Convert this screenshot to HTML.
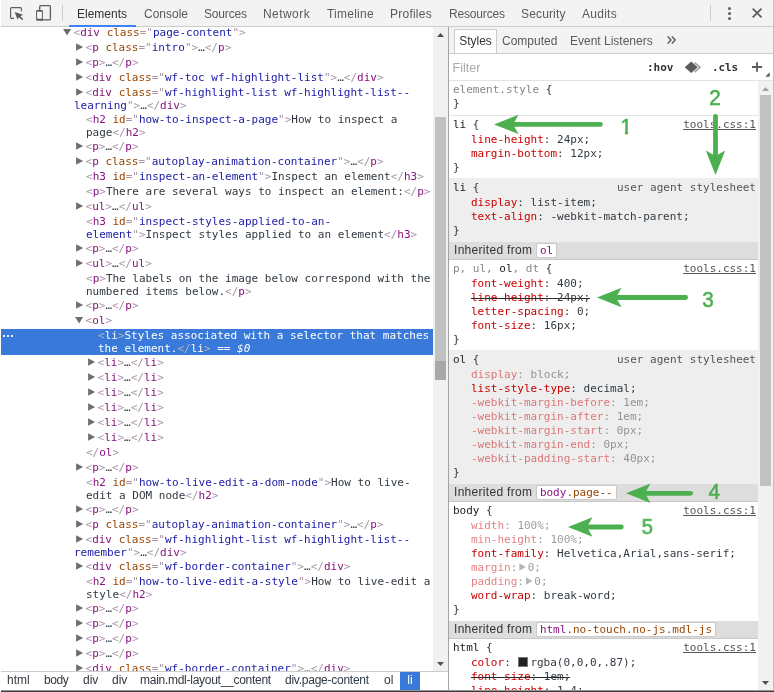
<!DOCTYPE html>
<html lang="en"><head><meta charset="utf-8"><title>DevTools</title>
<style>
*{box-sizing:border-box}
html,body{margin:0;padding:0}
body{width:774px;height:692px;position:relative;overflow:hidden;background:#fff;
  font-family:"Liberation Sans","DejaVu Sans",sans-serif;font-size:12px;color:#303942}
#app{position:absolute;left:0;top:0;width:774px;height:692px;overflow:hidden;will-change:transform}
.abs{position:absolute}
.mono,.tree,.sec,.node,.flt .m{font-family:"DejaVu Sans Mono","Liberation Mono",monospace;font-size:11px}
/* top toolbar */
#tb{left:1px;top:0;width:772px;height:27px;background:#f3f3f3;border-bottom:1px solid #cdcdcd}
#tb .tab{position:absolute;top:1px;height:26px;line-height:26px;color:#5a5a5a;white-space:nowrap}
#tb .tab.on{color:#333}
#tb .ul{position:absolute;left:68px;top:25px;width:67px;height:2px;background:#3e82f7}
.vsep{position:absolute;width:1px;background:#ccc}
/* tree */
#treewrap{left:1px;top:27px;width:432px;height:644px;overflow:hidden;background:#fff}
.tree{position:absolute;left:-1px;top:-2px;width:433px;color:#303942}
.r{line-height:13px;min-height:14px;margin-top:1px;white-space:nowrap;position:relative}
.b{color:#a894a6}.t{color:#881280}.an{color:#994500}.av{color:#1a1aa6}.el{color:#303942}
.tri{display:inline-block;width:11.5px;height:9px;position:relative;vertical-align:baseline}
.tri::before{content:"";position:absolute}
.tri.closed::before{left:2.1px;top:1.2px;width:7px;height:7.6px;background:#6e6e6e;clip-path:polygon(0 0,100% 50%,0 100%)}
.tri.open::before{left:1.1px;top:1.9px;width:8px;height:6.7px;background:#6e6e6e;clip-path:polygon(0 0,100% 0,50% 100%)}
.r.sel{background:#3879d9;color:#fff}
.r.sel .sb{color:#b9b3b0}
.dots{position:absolute;left:3px;top:6px;width:2px;height:2px;background:#e6eefb;box-shadow:4px 0 0 #e6eefb,8px 0 0 #e6eefb}
/* left scrollbar */
.sbar{background:#f1f1f1}
.thumb{background:#c1c1c1}
/* breadcrumbs */
#crumbs{left:1px;top:671px;width:447px;height:19px;border-top:1px solid #ccc;background:#fff}
#crumbs span{position:absolute;top:0;height:17px;line-height:17px;white-space:nowrap;color:#303942}
#crumbs .on{background:#3879d9;color:#fff;text-align:center;height:18px}
/* right panel */
#split{left:448px;top:27px;width:1px;height:663px;background:#a3a3a3}
#rp{left:449px;top:27px;width:325px;height:663px;background:#fff;overflow:hidden}
#rtabs{left:0;top:0;width:325px;height:27px;background:#f3f3f3;border-bottom:1px solid #ccc}
#rtabs .tab{position:absolute;top:3px;height:23px;line-height:23px;color:#5a5a5a;white-space:nowrap}
#rtabs .tab.on{top:2px;height:24px;line-height:23px;left:5px;width:43px;background:#fff;border:1px solid #ccc;border-bottom:none;color:#333;text-align:center}
#flt{left:0;top:27px;width:325px;height:27px;border-bottom:1px solid #e3e3e3;background:#fff}
#flt span{position:absolute;white-space:nowrap}
/* styles sections: coordinates are page coords, container offset */
#secs{left:0;top:-27px;width:309px;height:720px}
.sec{position:absolute;left:0;width:309px;padding:2px 2px 0 4px;overflow:hidden;color:#303942;white-space:nowrap}
.sec.pt3{padding-top:3px}
.sec.g{background:#eee}
.sec.w{background:#fff}
.sec.bb{border-bottom:1px solid #e4e4e4;height:35px !important}
.sec div{line-height:14px;height:14px}
.sec .hd{position:relative}
.br,.cb{color:#303942}
.sec .ps{height:auto;padding-top:1px}
.sec .p{padding-left:18px;position:relative}
.pn{color:#c80000}.pv{color:#303942}
.p.ni{opacity:.5}
.st{position:relative;display:inline-block;height:14px}
.st::after{content:"";position:absolute;left:0;right:0;top:7px;height:1px;background:#2a2a2a}
.dim{color:#888}.sm{color:#222}
.lk{position:absolute;right:0;top:0;text-decoration:underline;color:#545454}
.ua{position:absolute;right:0;top:0;color:#555}
.inh{letter-spacing:.3px;position:absolute;z-index:1;left:0;width:309px;height:18px;line-height:16px;background:#ddd;border-bottom:1px solid #c8c8c8;padding-left:5px;color:#333;white-space:nowrap}
.node{letter-spacing:0;display:inline-block;height:15px;line-height:13px;padding:0 3px;background:#fff;border:1px solid #c8c8c8;border-radius:2px;vertical-align:top;margin-top:1px}
.exp{display:inline-block;width:6.5px;height:7.4px;background:#6e6e6e;clip-path:polygon(0 0,100% 50%,0 100%);margin:0 1.8px 0 2px;vertical-align:.3px}
.sw{display:inline-block;width:10px;height:10px;background:#212121;border:1px solid #777;vertical-align:-1px;margin-left:1px;margin-right:2px}
svg{position:absolute;overflow:visible}
</style></head>
<body>
<div id="app">
<div id="tb" class="abs">
  <svg style="left:-1px;top:0" width="774" height="27" viewBox="0 0 774 27">
    <g fill="none" stroke="#5c5c5c" stroke-width="1.150">
      <path d="M14 18.300H11.600a1 1 0 0 1-1-1V8.600a1 1 0 0 1 1-1H20.400a1 1 0 0 1 1 1V11.300"/>
      <rect x="39.700" y="5.700" width="10.700" height="14.200" rx="1" stroke-width="1.300"/>
    </g>
    <path d="M14.700 11.900L23.100 14.700L20.500 16.300L23.300 19.200L21.900 20.100L19 17.200L17.400 19.400Z" fill="#5c5c5c"/>
    <rect x="36.100" y="10.100" width="6.800" height="10.600" rx="1" fill="#5c5c5c"/>
    <rect x="37.100" y="11.700" width="4.800" height="7" fill="#f6f6f6"/>
    <rect x="62" y="5" width="1" height="16" fill="#ccc"/>
    <rect x="710" y="5" width="1" height="16" fill="#ccc"/>
    <circle cx="729.500" cy="8.500" r="1.500" fill="#5c5c5c"/><circle cx="729.500" cy="13.500" r="1.500" fill="#5c5c5c"/><circle cx="729.500" cy="18.500" r="1.500" fill="#5c5c5c"/>
    <path d="M752.700 8.600l8.800 8.800M761.500 8.600l-8.800 8.800" stroke="#5c5c5c" stroke-width="1.700" fill="none"/>
  </svg>
  <div class="tab on" style="left:76px">Elements</div>
  <div class="tab" style="left:143px">Console</div>
  <div class="tab" style="left:203px;letter-spacing:-.17px">Sources</div>
  <div class="tab" style="left:262px;letter-spacing:.44px">Network</div>
  <div class="tab" style="left:326px;letter-spacing:.24px">Timeline</div>
  <div class="tab" style="left:389px;letter-spacing:.24px">Profiles</div>
  <div class="tab" style="left:448px;letter-spacing:-.17px">Resources</div>
  <div class="tab" style="left:520px;letter-spacing:.15px">Security</div>
  <div class="tab" style="left:581px;letter-spacing:.26px">Audits</div>
  <div class="ul"></div>
</div>

<div id="treewrap" class="abs"><div class="tree">
<div class="r" style="padding-left:62px"><span class="tri open"></span><span class="b">&lt;</span><span class="t">div</span> <span class="an">class</span><span class="b">="</span><span class="av">page-content</span><span class="b">"</span><span class="b">&gt;</span></div>
<div class="r" style="padding-left:74px"><span class="tri closed"></span><span class="b">&lt;</span><span class="t">p</span> <span class="an">class</span><span class="b">="</span><span class="av">intro</span><span class="b">"</span><span class="b">&gt;</span><span class="el">…</span><span class="b">&lt;/</span><span class="t">p</span><span class="b">&gt;</span></div>
<div class="r" style="padding-left:74px"><span class="tri closed"></span><span class="b">&lt;</span><span class="t">p</span><span class="b">&gt;</span><span class="el">…</span><span class="b">&lt;/</span><span class="t">p</span><span class="b">&gt;</span></div>
<div class="r" style="padding-left:74px"><span class="tri closed"></span><span class="b">&lt;</span><span class="t">div</span> <span class="an">class</span><span class="b">="</span><span class="av">wf-toc wf-highlight-list</span><span class="b">"</span><span class="b">&gt;</span><span class="el">…</span><span class="b">&lt;/</span><span class="t">div</span><span class="b">&gt;</span></div>
<div class="r" style="padding-left:74px"><span class="tri closed"></span><span class="b">&lt;</span><span class="t">div</span> <span class="an">class</span><span class="b">="</span><span class="av">wf-highlight-list wf-highlight-list--<br>learning</span><span class="b">"&gt;</span><span class="el">…</span><span class="b">&lt;/</span><span class="t">div</span><span class="b">&gt;</span></div>
<div class="r" style="padding-left:86px"><span class="b">&lt;</span><span class="t">h2</span> <span class="an">id</span><span class="b">="</span><span class="av">how-to-inspect-a-page</span><span class="b">"</span><span class="b">&gt;</span>How to inspect a<br>page<span class="b">&lt;/</span><span class="t">h2</span><span class="b">&gt;</span></div>
<div class="r" style="padding-left:74px"><span class="tri closed"></span><span class="b">&lt;</span><span class="t">p</span><span class="b">&gt;</span><span class="el">…</span><span class="b">&lt;/</span><span class="t">p</span><span class="b">&gt;</span></div>
<div class="r" style="padding-left:74px"><span class="tri closed"></span><span class="b">&lt;</span><span class="t">p</span> <span class="an">class</span><span class="b">="</span><span class="av">autoplay-animation-container</span><span class="b">"</span><span class="b">&gt;</span><span class="el">…</span><span class="b">&lt;/</span><span class="t">p</span><span class="b">&gt;</span></div>
<div class="r" style="padding-left:86px"><span class="b">&lt;</span><span class="t">h3</span> <span class="an">id</span><span class="b">="</span><span class="av">inspect-an-element</span><span class="b">"</span><span class="b">&gt;</span>Inspect an element<span class="b">&lt;/</span><span class="t">h3</span><span class="b">&gt;</span></div>
<div class="r" style="padding-left:86px"><span class="b">&lt;</span><span class="t">p</span><span class="b">&gt;</span>There are several ways to inspect an element:<span class="b">&lt;/</span><span class="t">p</span><span class="b">&gt;</span></div>
<div class="r" style="padding-left:74px"><span class="tri closed"></span><span class="b">&lt;</span><span class="t">ul</span><span class="b">&gt;</span><span class="el">…</span><span class="b">&lt;/</span><span class="t">ul</span><span class="b">&gt;</span></div>
<div class="r" style="padding-left:86px"><span class="b">&lt;</span><span class="t">h3</span> <span class="an">id</span><span class="b">="</span><span class="av">inspect-styles-applied-to-an-<br>element</span><span class="b">"&gt;</span>Inspect styles applied to an element<span class="b">&lt;/</span><span class="t">h3</span><span class="b">&gt;</span></div>
<div class="r" style="padding-left:74px"><span class="tri closed"></span><span class="b">&lt;</span><span class="t">p</span><span class="b">&gt;</span><span class="el">…</span><span class="b">&lt;/</span><span class="t">p</span><span class="b">&gt;</span></div>
<div class="r" style="padding-left:74px"><span class="tri closed"></span><span class="b">&lt;</span><span class="t">ul</span><span class="b">&gt;</span><span class="el">…</span><span class="b">&lt;/</span><span class="t">ul</span><span class="b">&gt;</span></div>
<div class="r" style="padding-left:86px"><span class="b">&lt;</span><span class="t">p</span><span class="b">&gt;</span>The labels on the image below correspond with the<br>numbered items below.<span class="b">&lt;/</span><span class="t">p</span><span class="b">&gt;</span></div>
<div class="r" style="padding-left:74px"><span class="tri closed"></span><span class="b">&lt;</span><span class="t">p</span><span class="b">&gt;</span><span class="el">…</span><span class="b">&lt;/</span><span class="t">p</span><span class="b">&gt;</span></div>
<div class="r" style="padding-left:74px"><span class="tri open"></span><span class="b">&lt;</span><span class="t">ol</span><span class="b">&gt;</span></div>
<div class="r sel" style="padding-left:98px"><span class="dots"></span><span class="sb">&lt;</span>li<span class="sb">&gt;</span>Styles associated with a selector that matches<br>the element.<span class="sb">&lt;/</span>li<span class="sb">&gt;</span> == <i>$0</i></div>
<div class="r" style="padding-left:86px"><span class="tri closed"></span><span class="b">&lt;</span><span class="t">li</span><span class="b">&gt;</span><span class="el">…</span><span class="b">&lt;/</span><span class="t">li</span><span class="b">&gt;</span></div>
<div class="r" style="padding-left:86px"><span class="tri closed"></span><span class="b">&lt;</span><span class="t">li</span><span class="b">&gt;</span><span class="el">…</span><span class="b">&lt;/</span><span class="t">li</span><span class="b">&gt;</span></div>
<div class="r" style="padding-left:86px"><span class="tri closed"></span><span class="b">&lt;</span><span class="t">li</span><span class="b">&gt;</span><span class="el">…</span><span class="b">&lt;/</span><span class="t">li</span><span class="b">&gt;</span></div>
<div class="r" style="padding-left:86px"><span class="tri closed"></span><span class="b">&lt;</span><span class="t">li</span><span class="b">&gt;</span><span class="el">…</span><span class="b">&lt;/</span><span class="t">li</span><span class="b">&gt;</span></div>
<div class="r" style="padding-left:86px"><span class="tri closed"></span><span class="b">&lt;</span><span class="t">li</span><span class="b">&gt;</span><span class="el">…</span><span class="b">&lt;/</span><span class="t">li</span><span class="b">&gt;</span></div>
<div class="r" style="padding-left:86px"><span class="tri closed"></span><span class="b">&lt;</span><span class="t">li</span><span class="b">&gt;</span><span class="el">…</span><span class="b">&lt;/</span><span class="t">li</span><span class="b">&gt;</span></div>
<div class="r" style="padding-left:86px"><span class="b">&lt;/</span><span class="t">ol</span><span class="b">&gt;</span></div>
<div class="r" style="padding-left:74px"><span class="tri closed"></span><span class="b">&lt;</span><span class="t">p</span><span class="b">&gt;</span><span class="el">…</span><span class="b">&lt;/</span><span class="t">p</span><span class="b">&gt;</span></div>
<div class="r" style="padding-left:86px"><span class="b">&lt;</span><span class="t">h2</span> <span class="an">id</span><span class="b">="</span><span class="av">how-to-live-edit-a-dom-node</span><span class="b">"</span><span class="b">&gt;</span>How to live-<br>edit a DOM node<span class="b">&lt;/</span><span class="t">h2</span><span class="b">&gt;</span></div>
<div class="r" style="padding-left:74px"><span class="tri closed"></span><span class="b">&lt;</span><span class="t">p</span><span class="b">&gt;</span><span class="el">…</span><span class="b">&lt;/</span><span class="t">p</span><span class="b">&gt;</span></div>
<div class="r" style="padding-left:74px"><span class="tri closed"></span><span class="b">&lt;</span><span class="t">p</span> <span class="an">class</span><span class="b">="</span><span class="av">autoplay-animation-container</span><span class="b">"</span><span class="b">&gt;</span><span class="el">…</span><span class="b">&lt;/</span><span class="t">p</span><span class="b">&gt;</span></div>
<div class="r" style="padding-left:74px"><span class="tri closed"></span><span class="b">&lt;</span><span class="t">div</span> <span class="an">class</span><span class="b">="</span><span class="av">wf-highlight-list wf-highlight-list--<br>remember</span><span class="b">"&gt;</span><span class="el">…</span><span class="b">&lt;/</span><span class="t">div</span><span class="b">&gt;</span></div>
<div class="r" style="padding-left:74px"><span class="tri closed"></span><span class="b">&lt;</span><span class="t">div</span> <span class="an">class</span><span class="b">="</span><span class="av">wf-border-container</span><span class="b">"</span><span class="b">&gt;</span><span class="el">…</span><span class="b">&lt;/</span><span class="t">div</span><span class="b">&gt;</span></div>
<div class="r" style="padding-left:86px"><span class="b">&lt;</span><span class="t">h2</span> <span class="an">id</span><span class="b">="</span><span class="av">how-to-live-edit-a-style</span><span class="b">"</span><span class="b">&gt;</span>How to live-edit a<br>style<span class="b">&lt;/</span><span class="t">h2</span><span class="b">&gt;</span></div>
<div class="r" style="padding-left:74px"><span class="tri closed"></span><span class="b">&lt;</span><span class="t">p</span><span class="b">&gt;</span><span class="el">…</span><span class="b">&lt;/</span><span class="t">p</span><span class="b">&gt;</span></div>
<div class="r" style="padding-left:74px"><span class="tri closed"></span><span class="b">&lt;</span><span class="t">p</span><span class="b">&gt;</span><span class="el">…</span><span class="b">&lt;/</span><span class="t">p</span><span class="b">&gt;</span></div>
<div class="r" style="padding-left:74px"><span class="tri closed"></span><span class="b">&lt;</span><span class="t">p</span><span class="b">&gt;</span><span class="el">…</span><span class="b">&lt;/</span><span class="t">p</span><span class="b">&gt;</span></div>
<div class="r" style="padding-left:74px"><span class="tri closed"></span><span class="b">&lt;</span><span class="t">p</span><span class="b">&gt;</span><span class="el">…</span><span class="b">&lt;/</span><span class="t">p</span><span class="b">&gt;</span></div>
<div class="r" style="padding-left:74px"><span class="tri closed"></span><span class="b">&lt;</span><span class="t">div</span> <span class="an">class</span><span class="b">="</span><span class="av">wf-border-container</span><span class="b">"</span><span class="b">&gt;</span><span class="el">…</span><span class="b">&lt;/</span><span class="t">div</span><span class="b">&gt;</span></div>

</div></div>

<div class="abs sbar" style="left:433px;top:27px;width:15px;height:644px"></div>
<div class="abs thumb" style="left:435px;top:117px;width:11px;height:244px"></div>
<div class="abs" style="left:435px;top:361px;width:11px;height:19px;background:#a8a8a8"></div>
<svg style="left:437px;top:33px" width="7" height="4" viewBox="0 0 7 4"><path d="M0 4l3.500-4 3.500 4z" fill="#505050"/></svg>
<svg style="left:437px;top:662px" width="7" height="4" viewBox="0 0 7 4"><path d="M0 0l3.500 4 3.500-4z" fill="#505050"/></svg>

<div id="crumbs" class="abs">
  <span style="left:6px">html</span>
  <span style="left:43px;letter-spacing:-.4px">body</span>
  <span style="left:82px">div</span>
  <span style="left:111px">div</span>
  <span style="left:139px;letter-spacing:-.27px">main.mdl-layout__content</span>
  <span style="left:284px;letter-spacing:-.25px">div.page-content</span>
  <span style="left:383px">ol</span>
  <span class="on" style="left:399px;width:20px">li</span>
</div>

<div id="split" class="abs"></div>
<div id="rp" class="abs">
  <div id="rtabs" class="abs">
    <div class="tab on">Styles</div>
    <div class="tab" style="left:53px">Computed</div>
    <div class="tab" style="left:121px">Event Listeners</div>
    <svg style="left:0;top:0" width="325" height="27" viewBox="449 27 325 27"><path d="M667.600 36.500L671 40L667.600 43.500M671.800 36.500L675.200 40L671.800 43.500" fill="none" stroke="#5a5a5a" stroke-width="1.400"/></svg>
  </div>
  <div id="flt" class="abs">
    <span style="left:3.600px;top:7px;color:#a9a9a9;font-size:12.500px">Filter</span>
    <span class="mono" style="left:198px;top:7px;color:#333;font-weight:bold">:hov</span>
    <svg style="left:0;top:0" width="325" height="27" viewBox="449 54 325 27">
      <path d="M684.700 67.300L691.200 61.600L697.700 67.300L691.200 73Z" fill="#5a5a5a"/>
      <path d="M694.600 62.600L700.100 67.300L694.600 72" fill="none" stroke="#a6a6a6" stroke-width="1.700"/>
      <path d="M757 62.200v9.600M752 67h10" stroke="#5a5a5a" stroke-width="1.800" fill="none"/>
      <path d="M769.700 72.300v4.400h-4.400z" fill="#5a5a5a"/>
    </svg>
    <span class="mono" style="left:263px;top:7px;color:#333;font-weight:bold;letter-spacing:-.1px">.cls</span>
  </div>
  <div id="secs" class="abs">
<div class="sec w bb" style="top:81px;height:34px"><div class="hd"><span class="dim">element.style</span><span class="br"> {</span></div><div class="cb">}</div></div>
<div class="sec w" style="top:116px;height:62px"><div class="hd"><span class="sm">li</span><span class="br"> {</span><span class="lk">tools.css:1</span></div><div class="ps"><div class="p "><span class="pn">line-height</span>: <span class="pv">24px</span>;</div><div class="p "><span class="pn">margin-bottom</span>: <span class="pv">12px</span>;</div></div><div class="cb">}</div></div>
<div class="sec g pt3" style="top:178px;height:64px"><div class="hd"><span class="sm">li</span><span class="br"> {</span><span class="ua">user agent stylesheet</span></div><div class="ps"><div class="p "><span class="pn">display</span>: <span class="pv">list-item</span>;</div><div class="p "><span class="pn">text-align</span>: <span class="pv">-webkit-match-parent</span>;</div></div><div class="cb">}</div></div>
<div class="inh" style="top:242px">Inherited from <span class="node"><span class="t">ol</span></span></div>
<div class="sec w pt3" style="top:259px;height:91px"><div class="hd"><span class="dim">p, ul, </span><span class="sm">ol</span><span class="dim">, dt</span><span class="br"> {</span><span class="lk">tools.css:1</span></div><div class="ps"><div class="p "><span class="pn">font-weight</span>: <span class="pv">400</span>;</div><div class="p ov"><span class="st"><span class="pn">line-height</span>: <span class="pv">24px</span>;</span></div><div class="p "><span class="pn">letter-spacing</span>: <span class="pv">0</span>;</div><div class="p "><span class="pn">font-size</span>: <span class="pv">16px</span>;</div></div><div class="cb">}</div></div>
<div class="sec g pt3" style="top:350px;height:134px"><div class="hd"><span class="sm">ol</span><span class="br"> {</span><span class="ua">user agent stylesheet</span></div><div class="ps"><div class="p ni"><span class="pn">display</span>: <span class="pv">block</span>;</div><div class="p "><span class="pn">list-style-type</span>: <span class="pv">decimal</span>;</div><div class="p ni"><span class="pn">-webkit-margin-before</span>: <span class="pv">1em</span>;</div><div class="p ni"><span class="pn">-webkit-margin-after</span>: <span class="pv">1em</span>;</div><div class="p ni"><span class="pn">-webkit-margin-start</span>: <span class="pv">0px</span>;</div><div class="p ni"><span class="pn">-webkit-margin-end</span>: <span class="pv">0px</span>;</div><div class="p ni"><span class="pn">-webkit-padding-start</span>: <span class="pv">40px</span>;</div></div><div class="cb">}</div></div>
<div class="inh" style="top:484px">Inherited from <span class="node"><span class="t">body</span><span class="an">.page--</span></span></div>
<div class="sec w pt3" style="top:501px;height:120px"><div class="hd"><span class="sm">body</span><span class="br"> {</span><span class="lk">tools.css:1</span></div><div class="ps"><div class="p ni"><span class="pn">width</span>: <span class="pv">100%</span>;</div><div class="p ni"><span class="pn">min-height</span>: <span class="pv">100%</span>;</div><div class="p "><span class="pn">font-family</span>: <span class="pv">Helvetica,Arial,sans-serif</span>;</div><div class="p ni"><span class="pn">margin</span>:<span class="exp"></span><span class="pv">0</span>;</div><div class="p ni"><span class="pn">padding</span>:<span class="exp"></span><span class="pv">0</span>;</div><div class="p "><span class="pn">word-wrap</span>: <span class="pv">break-word</span>;</div></div><div class="cb">}</div></div>
<div class="inh" style="top:621px">Inherited from <span class="node"><span class="t">html</span><span class="an">.no-touch.no-js.mdl-js</span></span></div>
<div class="sec w pt3" style="top:638px;height:60px"><div class="hd"><span class="sm">html</span><span class="br"> {</span><span class="lk">tools.css:1</span></div><div class="ps"><div class="p"><span class="pn">color</span>: <span class="sw"></span><span class="pv">rgba(0,0,0,.87)</span>;</div><div class="p ov"><span class="st"><span class="pn">font-size</span>: <span class="pv">1em</span>;</span></div><div class="p "><span class="pn">line-height</span>: <span class="pv">1.4</span>;</div></div></div>

  </div>
  <!-- right scrollbar -->
  <div class="abs sbar" style="left:309px;top:54px;width:15px;height:609px"></div>
  <div class="abs thumb" style="left:311px;top:68px;width:11px;height:391px"></div>
  <svg style="left:313px;top:60px" width="7" height="4" viewBox="0 0 7 4"><path d="M0 4l3.500-4 3.500 4z" fill="#a3a3a3"/></svg>
  <svg style="left:313px;top:654px" width="7" height="4" viewBox="0 0 7 4"><path d="M0 0l3.500 4 3.500-4z" fill="#505050"/></svg>
  <div class="abs" style="left:324px;top:0;width:1px;height:663px;background:#c0c0c0"></div>
</div>
<div class="abs" style="left:773px;top:0;width:1px;height:27px;background:#c4c4c4"></div>
<div class="abs" style="left:1px;top:690px;width:773px;height:2px;background:linear-gradient(#979797 0,#979797 50%,#3c3c3c 50%,#3c3c3c 100%)"></div>

<!-- annotations -->
<svg style="left:0;top:0;z-index:5" width="774" height="692" viewBox="0 0 774 692" fill="#4caf50">
  <g transform="translate(494 124.400)"><path d="M0 0L24.500 -9.700L19 0L24.500 9.700Z"/><path d="M18 0H106.300" stroke="#4caf50" stroke-width="4.800" stroke-linecap="round"/></g>
  <g transform="translate(715.500 175) rotate(-90)"><path d="M0 0L24.500 -9.700L19 0L24.500 9.700Z"/><path d="M18 0H58.700" stroke="#4caf50" stroke-width="4.800" stroke-linecap="round"/></g>
  <g transform="translate(597 297.500)"><path d="M0 0L24.500 -9.700L19 0L24.500 9.700Z"/><path d="M18 0H88.600" stroke="#4caf50" stroke-width="4.800" stroke-linecap="round"/></g>
  <g transform="translate(626 493.300)"><path d="M0 0L24.500 -9.700L19 0L24.500 9.700Z"/><path d="M18 0H64.600" stroke="#4caf50" stroke-width="4.800" stroke-linecap="round"/></g>
  <g transform="translate(568 527)"><path d="M0 0L24.500 -9.700L19 0L24.500 9.700Z"/><path d="M18 0H53.300" stroke="#4caf50" stroke-width="4.800" stroke-linecap="round"/></g>
  <g style="font-family:'Liberation Sans','DejaVu Sans',sans-serif;font-size:21.500px" text-anchor="middle" stroke="#4caf50" stroke-width=".55">
    <text transform="translate(626.200 133.900) scale(.96 1)">1</text>
    <text transform="translate(715.100 105.200) scale(.96 1)">2</text>
    <text transform="translate(707.900 306.800) scale(.96 1)">3</text>
    <text transform="translate(714.300 499.400) scale(.96 1)">4</text>
    <text transform="translate(647.300 534.100) scale(.96 1)">5</text>
  </g>
  <path d="M619 131.300h5.900v4.500h-5.900zM628.100 131.300h5v4.500h-5z" fill="#fff"/>
</svg>

</div>
</body></html>
